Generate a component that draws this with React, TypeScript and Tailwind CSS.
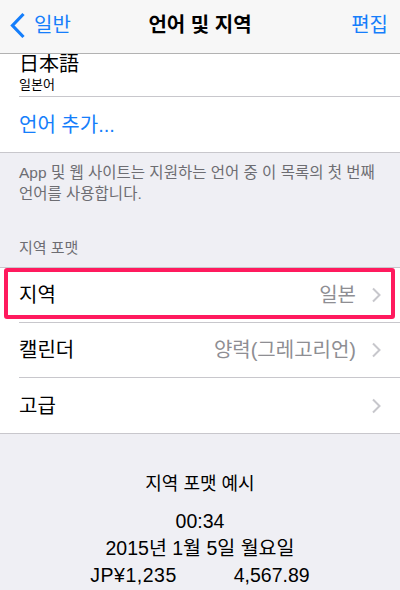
import React from "react";

const font = {
  fontFamily: '"Liberation Sans", "Noto Sans CJK KR", sans-serif',
};

function Chevron() {
  return (
    <svg width="11" height="16" viewBox="0 0 11 16" className="shrink-0">
      <path d="M2 1.5 L8.5 8 L2 14.5" fill="none" stroke="#c7c7cc" strokeWidth="2" />
    </svg>
  );
}

type RowProps = { label: string; value?: string; last?: boolean };

function Row({ label, value, last }: RowProps) {
  return (
    <div className="pl-[19px]">
      <div
        className={
          "flex h-[55px] items-center pr-[18px] " +
          (last ? "" : "border-b border-[#c8c7cc]")
        }
      >
        <span className="flex-1 text-[20px] text-black">{label}</span>
        {value && <span className="mr-[15px] text-[20px] text-[#8e8e93]">{value}</span>}
        <Chevron />
      </div>
    </div>
  );
}

export default function App() {
  return (
    <div className="h-[590px] w-[400px] overflow-hidden bg-[#efeff4]" style={font}>
      {/* nav */}
      <div className="relative z-10 grid h-[54px] grid-cols-[1fr_auto_1fr] items-center border-b border-[#b2b2b2] bg-[#f7f7f7]">
        <div className="flex items-center text-[20px] text-[#157efb]">
          <svg width="34" height="30" viewBox="0 0 34 30" className="shrink-0">
            <path d="M23.5 2 L12.5 13.5 L23.5 25" fill="none" stroke="#157efb" strokeWidth="3.2" />
          </svg>
          <span className="-mt-[4px]">일반</span>
        </div>
        <div className="-mt-[4px] text-[20px] font-semibold text-black">언어 및 지역</div>
        <div className="-mt-[4px] pr-[12px] text-right text-[20px] text-[#157efb]">편집</div>
      </div>

      {/* languages */}
      <div className="border-b border-[#c8c7cc] bg-white">
        <div className="pl-[19px]">
          <div className="flex h-[43px] flex-col border-b border-[#c8c7cc]">
            <div className="text-[20px] leading-[20px] text-black">日本語</div>
            <div className="mt-[3px] text-[13px] leading-[16px] text-black">일본어</div>
          </div>
        </div>
        <div className="flex h-[55px] items-center pl-[19px] text-[20px] text-[#157efb]">
          언어 추가...
        </div>
      </div>

      <div className="px-[19px] pt-[9px] text-[15.5px] leading-[21px] text-[#6d6d72]">
        App 및 웹 사이트는 지원하는 언어 중 이 목록의 첫 번째 언어를 사용합니다.
      </div>
      <div className="mt-[33px] px-[19px] pb-[9px] text-[15px] leading-[21px] text-[#6d6d72]">
        지역 포맷
      </div>

      {/* region rows */}
      <div className="relative border-y border-[#c8c7cc] bg-white">
        <Row label="지역" value="일본" />
        <Row label="캘린더" value="양력(그레고리언)" />
        <Row label="고급" last />
        <div className="pointer-events-none absolute left-[4px] right-[5px] top-0 h-[51px] rounded-[3px] border-[4px] border-[#ff1a5e]" />
      </div>

      {/* preview */}
      <div className="pt-[37px] text-center text-black">
        <div className="text-[18px] leading-[26px]">지역 포맷 예시</div>
        <div className="mt-[11px] text-[19.5px] leading-[27px]">
          <div>00:34</div>
          <div>2015년 1월 5일 월요일</div>
          <div className="flex justify-center gap-[57px]">
            <span className="tracking-[0.5px]">JP¥1,235</span>
            <span>4,567.89</span>
          </div>
        </div>
      </div>
    </div>
  );
}
